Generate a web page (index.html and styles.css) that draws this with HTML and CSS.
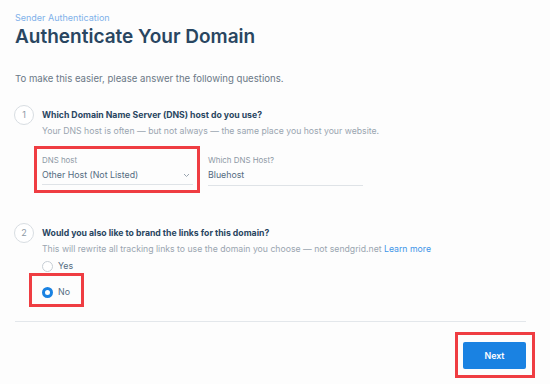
FILE: index.html
```html
<!DOCTYPE html>
<html lang="en">
<head>
    <meta charset="UTF-8">
    <title>Sender Authentication - Authenticate Your Domain</title>
    <link rel="stylesheet" href="styles.css">
</head>
<body>
    <div class="page">
        <div class="eyebrow">Sender Authentication</div>
        <h1 class="title">Authenticate Your Domain</h1>
        <p class="intro">To make this easier, please answer the following questions.</p>

        <div class="step step-one">
            <div class="step-num">1</div>
            <div class="step-body">
                <div class="question">Which Domain Name Server (DNS) host do you use?</div>
                <div class="hint">Your DNS host is often — but not always — the same place you host your website.</div>
                <div class="fields">
                    <div class="field-box">
                        <div class="field">
                            <label class="field-label">DNS host</label>
                            <div class="field-value select-value">
                                <span>Other Host (Not Listed)</span>
                                <svg class="chevron" width="7" height="5" viewBox="0 0 7 5"><path d="M1 1l2.5 2.5L6 1" fill="none" stroke="#9aa5b0" stroke-width="1"/></svg>
                            </div>
                        </div>
                    </div>
                    <div class="field field-plain">
                        <label class="field-label">Which DNS Host?</label>
                        <div class="field-value">Bluehost</div>
                    </div>
                </div>
            </div>
        </div>

        <div class="step step-two">
            <div class="step-num">2</div>
            <div class="step-body">
                <div class="question">Would you also like to brand the links for this domain?</div>
                <div class="hint">This will rewrite all tracking links to use the domain you choose — not sendgrid.net <a class="link" href="#">Learn more</a></div>
                <div class="radios">
                    <label class="radio"><span class="radio-dot"></span>Yes</label>
                    <div class="radio-box">
                        <label class="radio"><span class="radio-dot checked"></span>No</label>
                    </div>
                </div>
            </div>
        </div>

        <hr class="divider">

        <div class="actions">
            <div class="btn-box">
                <button class="btn-primary">Next</button>
            </div>
        </div>
    </div>
</body>
</html>
```

FILE: styles.css
```css
body {
    margin: 0;
    background-color: #fdfdfd;
    font-family: Inter, "Liberation Sans", Arial, sans-serif;
    color: #294661;
}

.page {
    width: 511px;
    padding: 12px 0 0 15px;
}

.eyebrow {
    font-size: 9px;
    line-height: 12px;
    color: #7fb1ea;
}

.title {
    margin: -1px 0 0 0;
    font-size: 19px;
    line-height: 28px;
    font-weight: 600;
    color: #294661;
}

.intro {
    margin: 21px 0 0 0;
    font-size: 9.6px;
    line-height: 14px;
    color: #6b7886;
}

.step {
    display: flex;
    gap: 8px;
}

.step-one {
    margin-top: 19px;
}

.step-two {
    margin-top: 30px;
}

.step-num {
    flex: none;
    width: 18px;
    height: 18px;
    margin-left: -1px;
    border: 1px solid #d8dde2;
    border-radius: 50%;
    font-size: 9px;
    line-height: 18px;
    text-align: center;
    color: #8d99a5;
    background-color: #fff;
}

.step-body {
    flex: 1;
    padding-top: 3px;
}

.question {
    font-size: 8.7px;
    line-height: 14px;
    font-weight: 700;
    color: #294661;
}

.hint {
    margin-top: 2px;
    font-size: 8.7px;
    line-height: 14px;
    color: #9aa5b0;
}

.link {
    color: #3d95e8;
    text-decoration: none;
}

.fields {
    display: flex;
    align-items: flex-start;
    gap: 8px;
    margin-top: 8px;
    margin-left: -8px;
}

.field-box {
    border: 3px solid #ef3d42;
    padding: 5px 4px 5px 5px;
}

.field {
    width: 151px;
}

.field-plain {
    width: 155px;
    padding-top: 8px;
}

.field-label {
    display: block;
    font-size: 7.9px;
    line-height: 12px;
    color: #8d99a5;
}

.field-value {
    margin-top: 2px;
    padding-bottom: 3px;
    border-bottom: 1px solid #dfe3e7;
    font-size: 8.8px;
    line-height: 14px;
    color: #546b81;
}

.select-value {
    display: flex;
    justify-content: space-between;
    align-items: center;
    padding-bottom: 2px;
}

.chevron {
    margin-right: 3px;
}

.radios {
    margin-top: 3px;
}

.radio {
    display: flex;
    align-items: center;
    gap: 5px;
    font-size: 8.8px;
    line-height: 14px;
    color: #546b81;
}

.radio-dot {
    width: 9px;
    height: 9px;
    border: 1px solid #c7ced5;
    border-radius: 50%;
    background-color: #fff;
    box-sizing: content-box;
}

.radio-dot.checked {
    width: 5px;
    height: 5px;
    border: 3px solid #1a82e2;
}

.radio-box {
    display: inline-block;
    margin: 0 0 0 -13px;
    padding: 9px 11px 5px 10px;
    border: 3px solid #ef3d42;
}

.divider {
    margin: 14px 0 0 0;
    border: none;
    border-top: 1px solid #e3e7eb;
}

.actions {
    display: flex;
    justify-content: flex-end;
    margin-top: 10px;
    margin-right: -9px;
}

.btn-box {
    padding: 7px 6px 6px 5px;
    border: 3px solid #ef3d42;
}

.btn-primary {
    display: block;
    width: 63px;
    height: 27px;
    padding: 0;
    border: none;
    border-radius: 2px;
    background-color: #1a82e2;
    color: #fff;
    font-family: inherit;
    font-size: 8.8px;
    font-weight: 600;
}
```
